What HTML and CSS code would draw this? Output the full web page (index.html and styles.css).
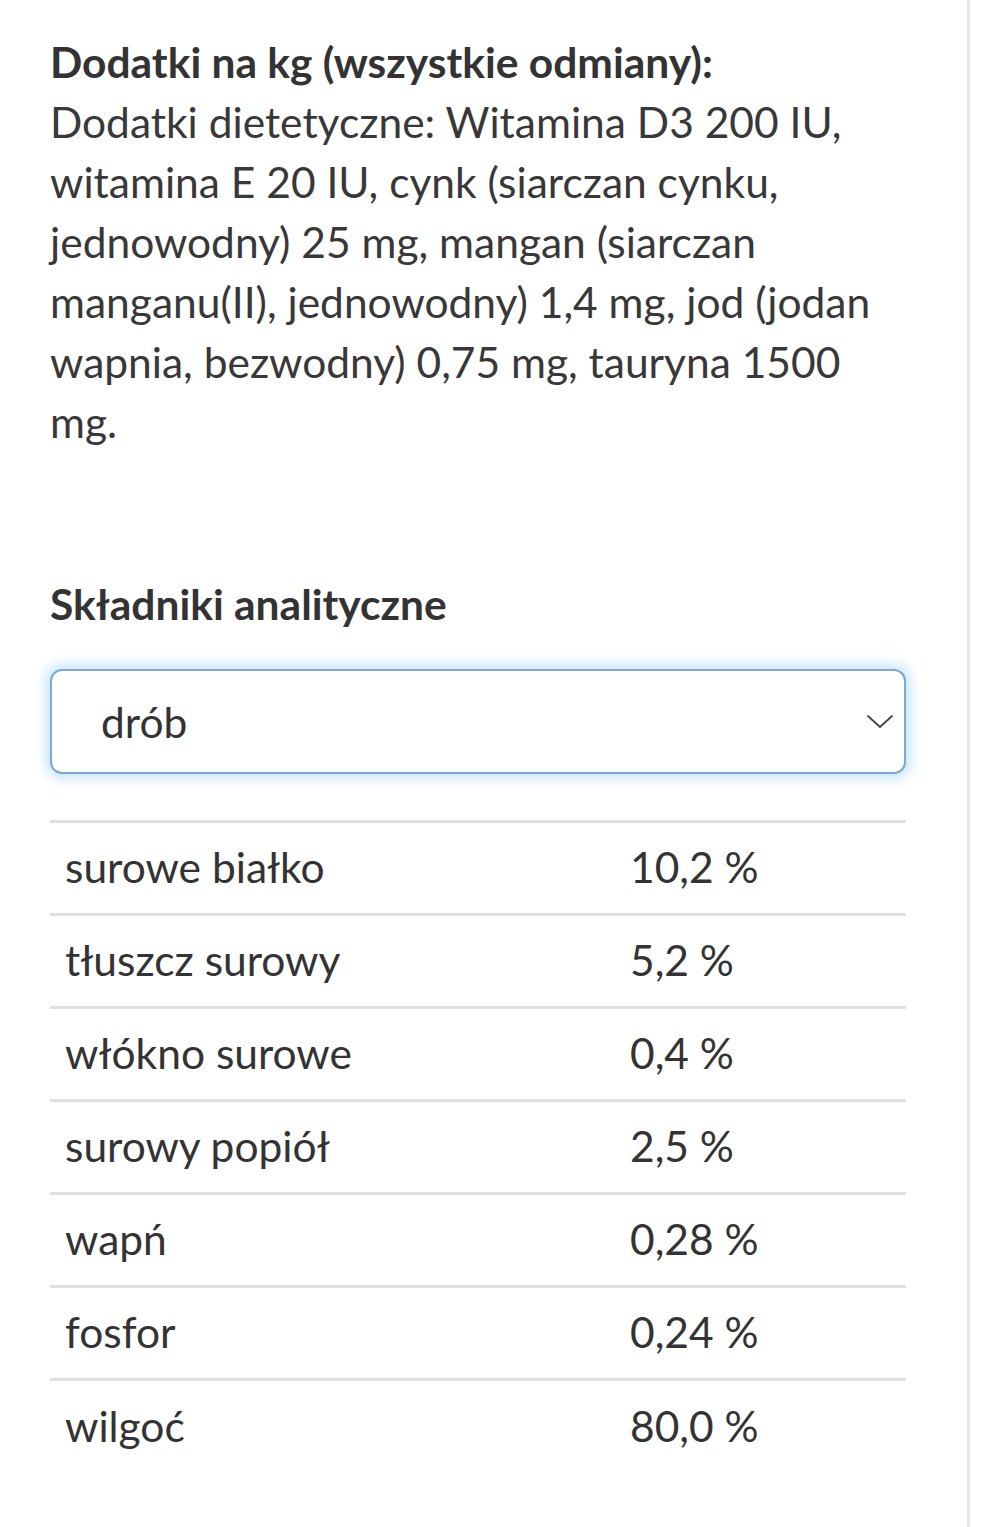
FILE: index.html
```html
<!DOCTYPE html>
<html lang="pl">
<head>
<meta charset="utf-8">
<link rel="stylesheet" href="styles.css">
</head>
<body>
<div class="page">
  <div class="content">
    <p class="additives"><strong>Dodatki na kg (wszystkie odmiany):</strong><br>Dodatki dietetyczne: Witamina D3 200 IU, witamina E 20 IU, cynk (siarczan cynku, jednowodny) 25 mg, mangan (siarczan manganu(II), jednowodny) 1,4 mg, jod (jodan wapnia, bezwodny) 0,75 mg, tauryna 1500 mg.</p>

    <h2 class="section-title">Składniki analityczne</h2>

    <div class="select">
      <span class="select-value">drób</span>
      <svg class="chevron" width="28" height="16" viewBox="0 0 28 16"><path d="M2 2 L14 13 L26 2" fill="none" stroke="#444" stroke-width="1.8" stroke-linecap="round" stroke-linejoin="round"/></svg>
    </div>

    <div class="table">
      <div class="row"><span class="name">surowe białko</span><span class="val">10,2 %</span></div>
      <div class="row"><span class="name">tłuszcz surowy</span><span class="val">5,2 %</span></div>
      <div class="row"><span class="name">włókno surowe</span><span class="val">0,4 %</span></div>
      <div class="row"><span class="name">surowy popiół</span><span class="val">2,5 %</span></div>
      <div class="row"><span class="name">wapń</span><span class="val">0,28 %</span></div>
      <div class="row"><span class="name">fosfor</span><span class="val">0,24 %</span></div>
      <div class="row last"><span class="name">wilgoć</span><span class="val">80,0 %</span></div>
    </div>
  </div>
</div>
</body>
</html>
```

FILE: styles.css
```css
* { box-sizing: border-box; }
html, body { margin: 0; padding: 0; background: #fff; }
body {
  font-family: "Lato", "Open Sans", sans-serif;
  color: #333;
}
.page {
  width: 970px;
  min-height: 1527px;
  border-right: 3px solid #e8e6de;
}
.content {
  padding: 32px 0 0 50px;
  width: 906px;
}
.additives {
  margin: 0;
  font-size: 42.5px;
  line-height: 60px;
  color: #383838;
}
.additives strong { font-weight: 700; color: #333; }
.section-title {
  margin: 122px 0 0;
  font-size: 42.5px;
  line-height: 60px;
  font-weight: 700;
  color: #333;
}
.select {
  margin-top: 35px;
  height: 105px;
  border: 2px solid #7aa9d4;
  border-radius: 12px;
  box-shadow: 0 0 12px 5px rgba(140, 200, 245, 0.45);
  display: flex;
  align-items: center;
  justify-content: space-between;
  padding: 0 10px 0 49px;
  background: #fff;
}
.select-value {
  font-size: 42.5px;
  color: #333;
}
.chevron { display: block; }
.table {
  margin-top: 46px;
  border-top: 3px solid #e0e0e0;
}
.row {
  display: grid;
  grid-template-columns: 580px 1fr;
  height: 93px;
  align-items: center;
  border-bottom: 3px solid #e0e0e0;
  font-size: 42.5px;
  color: #333;
  padding-bottom: 4px;
}
.row.last { border-bottom: none; }
.name { padding-left: 15px; }
```
